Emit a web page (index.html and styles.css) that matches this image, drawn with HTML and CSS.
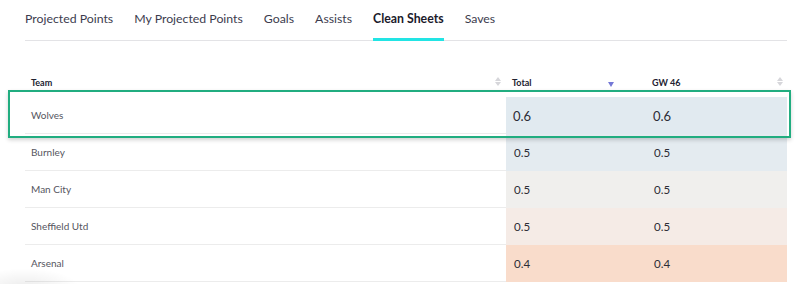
FILE: index.html
```html
<!DOCTYPE html>
<html>
<head>
<meta charset="utf-8">
<link rel="stylesheet" href="styles.css">
</head>
<body>
<div class="page">
  <nav class="tabs">
    <span class="tab">Projected Points</span>
    <span class="tab">My Projected Points</span>
    <span class="tab">Goals</span>
    <span class="tab">Assists</span>
    <span class="tab active">Clean Sheets</span>
    <span class="tab">Saves</span>
  </nav>
  <div class="table">
    <div class="row head">
      <div class="cell team"><span>Team</span><span class="sort"></span></div>
      <div class="cell num total"><span>Total</span><span class="down"></span></div>
      <div class="cell num last"><span>GW 46</span><span class="sort"></span></div>
    </div>
    <div class="row big">
      <div class="cell team">Wolves</div>
      <div class="cell num c1">0.6</div>
      <div class="cell num c1">0.6</div>
    </div>
    <div class="row">
      <div class="cell team">Burnley</div>
      <div class="cell num c2">0.5</div>
      <div class="cell num c2">0.5</div>
    </div>
    <div class="row">
      <div class="cell team">Man City</div>
      <div class="cell num c3">0.5</div>
      <div class="cell num c3">0.5</div>
    </div>
    <div class="row">
      <div class="cell team">Sheffield Utd</div>
      <div class="cell num c4">0.5</div>
      <div class="cell num c4">0.5</div>
    </div>
    <div class="row">
      <div class="cell team">Arsenal</div>
      <div class="cell num c5">0.4</div>
      <div class="cell num c5">0.4</div>
    </div>
    <div class="highlight"></div>
  </div>
  <div class="fade"></div>
</div>
</body>
</html>
```

FILE: styles.css
```css
html, body {
  margin: 0;
  padding: 0;
  background: #ffffff;
}
body {
  font-family: Lato, "Noto Sans", sans-serif;
  width: 800px;
  height: 284px;
  overflow: hidden;
}
.page {
  position: relative;
  height: 284px;
  overflow: hidden;
  padding: 0 13px 0 25px;
}
.tabs {
  display: flex;
  gap: 21px;
  height: 41px;
  border-bottom: 1px solid #e3e3e6;
  box-sizing: border-box;
}
.tab {
  font-size: 12.3px;
  color: #3c3c4e;
  line-height: 37px;
  height: 41px;
  box-sizing: border-box;
  border-bottom: 3px solid transparent;
}
.tab.active {
  font-weight: 700;
  color: #1b1b2b;
  border-bottom-color: #22e4e4;
}
.table {
  position: relative;
  margin-top: 35px;
}
.row {
  display: grid;
  grid-template-columns: 481px 140px 141px;
  height: 37px;
}
.row.head {
  height: 21px;
}
.cell {
  display: flex;
  align-items: center;
  box-sizing: border-box;
}
.team {
  padding-left: 6px;
  font-size: 10px;
  color: #555560;
  border-bottom: 1px solid #ececec;
}
.head .cell {
  font-size: 9px;
  font-weight: 700;
  color: #222230;
  border-bottom: none;
  align-items: flex-start;
  padding-top: 1px;
}
.head .team {
  justify-content: space-between;
  padding-right: 5px;
}
.head .total {
  justify-content: space-between;
  padding-left: 6px;
  padding-right: 32px;
}
.head .total .down {
  margin-top: 5px;
}
.head .last {
  justify-content: space-between;
  padding-left: 6px;
  padding-right: 4px;
}
.sort {
  display: inline-block;
  width: 6px;
  height: 9px;
  position: relative;
}
.sort::before, .sort::after {
  content: "";
  position: absolute;
  left: 0;
  border-left: 3px solid transparent;
  border-right: 3px solid transparent;
}
.sort::before {
  top: 0;
  border-bottom: 4px solid #d6d6da;
}
.sort::after {
  top: 5px;
  border-top: 4px solid #d6d6da;
}
.down {
  display: inline-block;
  width: 0;
  height: 0;
  border-left: 3.5px solid transparent;
  border-right: 3.5px solid transparent;
  border-top: 5px solid #7478d6;
}
.num {
  padding-left: 8px;
  font-size: 11.5px;
  color: #2c2c36;
}
.big .num {
  font-size: 13px;
  padding-left: 7px;
}
.c1 { background: #e1eaf0; }
.c2 { background: #e4ebf0; }
.c3 { background: #f0efed; }
.c4 { background: #f5ebe6; }
.c5 { background: #f9dccb; }
.highlight {
  position: absolute;
  left: -17px;
  top: 14px;
  width: 783px;
  height: 48px;
  box-sizing: border-box;
  border: 2px solid #21ad80;
  box-shadow: 0 2px 4px rgba(0, 0, 0, 0.18);
  pointer-events: none;
}
.fade {
  position: absolute;
  left: -30px;
  bottom: -24px;
  width: 110px;
  height: 40px;
  background: radial-gradient(ellipse at center, rgba(0,0,0,0.08), rgba(0,0,0,0) 70%);
}
```
